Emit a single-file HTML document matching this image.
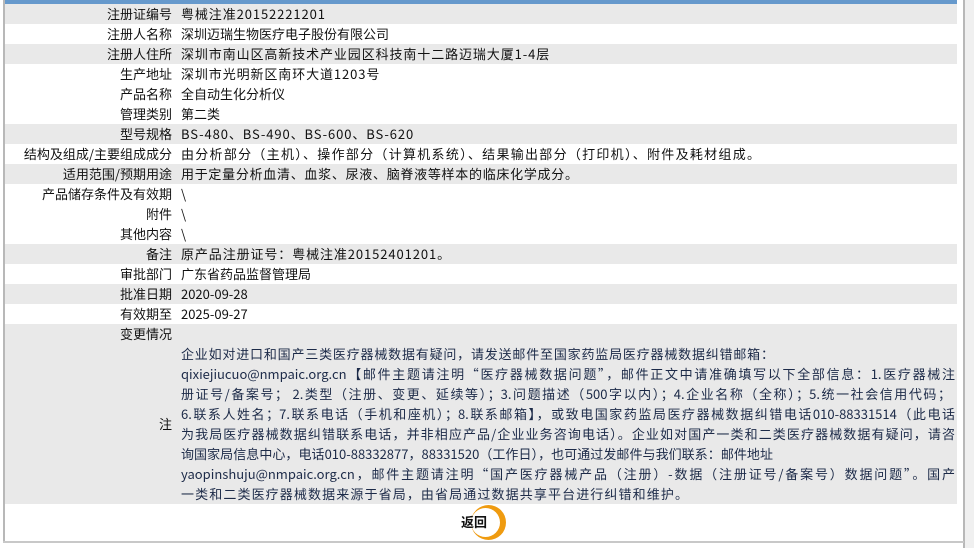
<!DOCTYPE html>
<html><head><meta charset="utf-8"><style>
html,body{margin:0;padding:0;background:#fff;}
body{width:974px;height:548px;position:relative;overflow:hidden;font-family:"Noto Sans CJK SC","Liberation Sans",sans-serif;font-size:13px;color:#111;}
.rside{position:absolute;left:963px;top:0;width:11px;height:548px;background:#f0f0f0;border-left:2px solid #b8b8b8;box-sizing:border-box;}
.lb{position:absolute;left:3px;top:0;width:2px;height:543px;background:#b8b8b8;}
.bb{position:absolute;left:3px;top:541px;width:961px;height:2px;background:#c8c8c8;}
.top{position:absolute;left:5px;top:0;width:952px;height:4px;background:#6699cc;}
.row{position:absolute;left:5px;width:952px;height:20px;line-height:20px;white-space:nowrap;}
.g{background:#e9e9e9;}
.l{position:absolute;left:0;width:167px;text-align:right;}
.v{position:absolute;left:176px;}
.s{letter-spacing:0.9px;}
.j{display:block;text-align:justify;text-align-last:justify;white-space:nowrap;}
.note{position:absolute;left:5px;top:344px;width:952px;height:160px;background:#e9e9e9;}
.note .l{top:70px;line-height:20px;}
.note .t{position:absolute;left:176px;top:0;line-height:20px;color:#1c2a48;}
.note .t span{display:block;height:20px;text-align:justify;text-align-last:justify;white-space:nowrap;}
.btn{position:absolute;left:471px;top:505px;width:35px;height:35px;border-radius:50%;background:#ef9b10;}
.btn2{position:absolute;left:471px;top:508px;width:29px;height:29px;border-radius:50%;background:#fff;}
.bt{position:absolute;left:461px;top:512px;line-height:20px;font-weight:bold;color:#111;}
</style></head><body>
<div class="top"></div>
<div class="lb"></div>
<div class="rside"></div>
<div class="row g" style="top:4px"><span class="l">注册证编号</span><span class="v s">粤械注准20152221201</span></div>
<div class="row" style="top:24px"><span class="l">注册人名称</span><span class="v">深圳迈瑞生物医疗电子股份有限公司</span></div>
<div class="row g" style="top:44px"><span class="l">注册人住所</span><span class="v s">深圳市南山区高新技术产业园区科技南十二路迈瑞大厦1-4层</span></div>
<div class="row" style="top:64px"><span class="l">生产地址</span><span class="v s">深圳市光明新区南环大道1203号</span></div>
<div class="row" style="top:84px"><span class="l">产品名称</span><span class="v">全自动生化分析仪</span></div>
<div class="row" style="top:104px"><span class="l">管理类别</span><span class="v">第二类</span></div>
<div class="row g" style="top:124px"><span class="l">型号规格</span><span class="v s">BS-480、BS-490、BS-600、BS-620</span></div>
<div class="row" style="top:144px"><span class="l">结构及组成/主要组成成分</span><span class="v j" style="width:579px">由分析部分（主机）、操作部分（计算机系统）、结果输出部分（打印机）、附件及耗材组成。</span></div>
<div class="row g" style="top:164px"><span class="l">适用范围/预期用途</span><span class="v j" style="width:397px">用于定量分析血清、血浆、尿液、脑脊液等样本的临床化学成分。</span></div>
<div class="row" style="top:184px"><span class="l">产品储存条件及有效期</span><span class="v">\</span></div>
<div class="row" style="top:204px"><span class="l">附件</span><span class="v">\</span></div>
<div class="row" style="top:224px"><span class="l">其他内容</span><span class="v">\</span></div>
<div class="row g" style="top:244px"><span class="l">备注</span><span class="v s">原产品注册证号：粤械注准20152401201。</span></div>
<div class="row" style="top:264px"><span class="l">审批部门</span><span class="v">广东省药品监督管理局</span></div>
<div class="row g" style="top:284px"><span class="l">批准日期</span><span class="v">2020-09-28</span></div>
<div class="row" style="top:304px"><span class="l">有效期至</span><span class="v">2025-09-27</span></div>
<div class="row g" style="top:324px"><span class="l">变更情况</span></div>
<div class="note"><span class="l">注</span><div class="t">
<span style="width:593px">企业如对进口和国产三类医疗器械数据有疑问，请发送邮件至国家药监局医疗器械数据纠错邮箱：</span>
<span style="width:774px">qixiejiucuo@nmpaic.org.cn【邮件主题请注明“医疗器械数据问题”，邮件正文中请准确填写以下全部信息：1.医疗器械注</span>
<span style="width:770px">册证号/备案号； 2.类型（注册、变更、延续等）；3.问题描述（500字以内）；4.企业名称（全称）；5.统一社会信用代码；</span>
<span style="width:774px">6.联系人姓名；7.联系电话（手机和座机）；8.联系邮箱】，或致电国家药监局医疗器械数据纠错电话010-88331514（此电话</span>
<span style="width:774px">为我局医疗器械数据纠错联系电话，并非相应产品/企业业务咨询电话）。企业如对国产一类和二类医疗器械数据有疑问，请咨</span>
<span style="width:592px">询国家局信息中心，电话010-88332877，88331520（工作日），也可通过发邮件与我们联系：邮件地址</span>
<span style="width:774px">yaopinshuju@nmpaic.org.cn，邮件主题请注明“国产医疗器械产品（注册）-数据（注册证号/备案号）数据问题”。国产</span>
<span style="width:507px">一类和二类医疗器械数据来源于省局，由省局通过数据共享平台进行纠错和维护。</span>
</div></div>
<div class="btn"></div><div class="btn2"></div>
<div class="bt">返回</div>
<div class="bb"></div>
</body></html>
